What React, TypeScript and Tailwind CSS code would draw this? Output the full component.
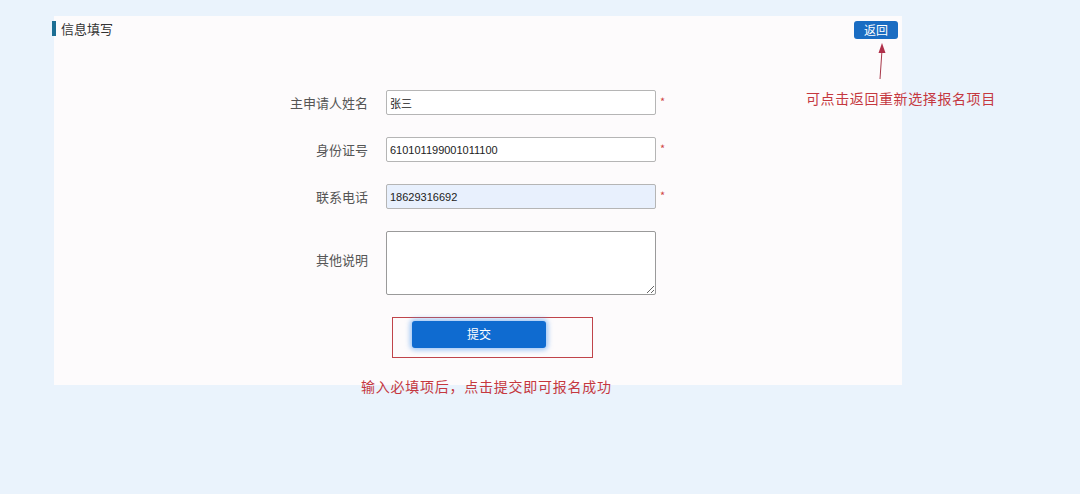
import React from "react";

const labelCls = "w-[314px] text-right text-[13px] text-[#555] pr-0";
const inputCls =
  "w-[270px] h-[25px] border border-[#b5b5b5] rounded-[2px] px-[3px] text-[11px] text-[#222] outline-none";

function Star() {
  return <span className="ml-[4px] self-start mt-[3px] text-[11px] text-[#d04545]">*</span>;
}

export default function App() {
  return (
    <div
      className="relative w-full h-[494px] bg-[#eaf3fc] pl-[54px] pt-[16px] overflow-hidden"
      style={{ fontFamily: '"Noto Sans CJK SC", "Liberation Sans", sans-serif' }}
    >
      <div className="w-[848px] h-[369px] bg-[#fdfbfc]">
        {/* header */}
        <div className="flex items-start justify-between pt-[5px] pr-[4px]">
          <div className="flex items-center h-[16px] -mt-[1px] -ml-[2px]">
            <span className="w-[4px] h-[15px] bg-[#1d6e93]" />
            <span className="ml-[5px] text-[13px] text-[#333] leading-none">信息填写</span>
          </div>
          <button className="w-[44px] h-[18px] rounded-[3px] bg-[#1a6cc2] text-white text-[12px] leading-none">
            返回
          </button>
        </div>

        {/* form */}
        <div className="mt-[51px] flex flex-col gap-[22px]">
          <div className="flex items-center">
            <label className={labelCls}>主申请人姓名</label>
            <input className={`${inputCls} ml-[18px] bg-white`} defaultValue="张三" />
            <Star />
          </div>
          <div className="flex items-center">
            <label className={labelCls}>身份证号</label>
            <input className={`${inputCls} ml-[18px] bg-white`} defaultValue="610101199001011100" style={{ fontFamily: '"Liberation Sans", sans-serif' }} />
            <Star />
          </div>
          <div className="flex items-center">
            <label className={labelCls}>联系电话</label>
            <input className={`${inputCls} ml-[18px] bg-[#e8f0fd]`} defaultValue="18629316692" style={{ fontFamily: '"Liberation Sans", sans-serif' }} />
            <Star />
          </div>
          <div className="flex items-center">
            <label className={`${labelCls} -mt-[6px]`}>其他说明</label>
            <textarea className="ml-[18px] w-[270px] h-[64px] border border-[#9a9a9a] rounded-[2px] bg-white outline-none" />
          </div>
          <div className="ml-[338px] w-[201px] h-[41px] border border-[#c0444a] pl-[19px] pt-[2px]">
            <button className="w-[134px] h-[27px] rounded-[3px] bg-[#0f6bd0] text-white text-[12px] shadow-[0_0_5px_2px_rgba(90,160,240,0.6)]">
              提交
            </button>
          </div>
        </div>
      </div>

      {/* annotations */}
      <svg className="absolute left-[872px] top-[40px]" width="20" height="42" viewBox="0 0 20 42">
        <line x1="8" y1="39" x2="10" y2="10" stroke="#a8384a" strokeWidth="1" />
        <polygon points="10,3 6.5,13 13.5,13" fill="#b0304a" />
      </svg>
      <div
        className="absolute left-[806px] top-[89px] text-[14px] tracking-[0.6px] text-[#c5383f] whitespace-nowrap"
        style={{ fontFamily: '"Liberation Serif", "Noto Sans CJK SC", serif' }}
      >
        可点击返回重新选择报名项目
      </div>
      <div
        className="absolute left-[361px] top-[377px] text-[14px] tracking-[0.75px] text-[#c5383f] whitespace-nowrap"
        style={{ fontFamily: '"Liberation Serif", "Noto Sans CJK SC", serif' }}
      >
        输入必填项后，点击提交即可报名成功
      </div>
    </div>
  );
}
